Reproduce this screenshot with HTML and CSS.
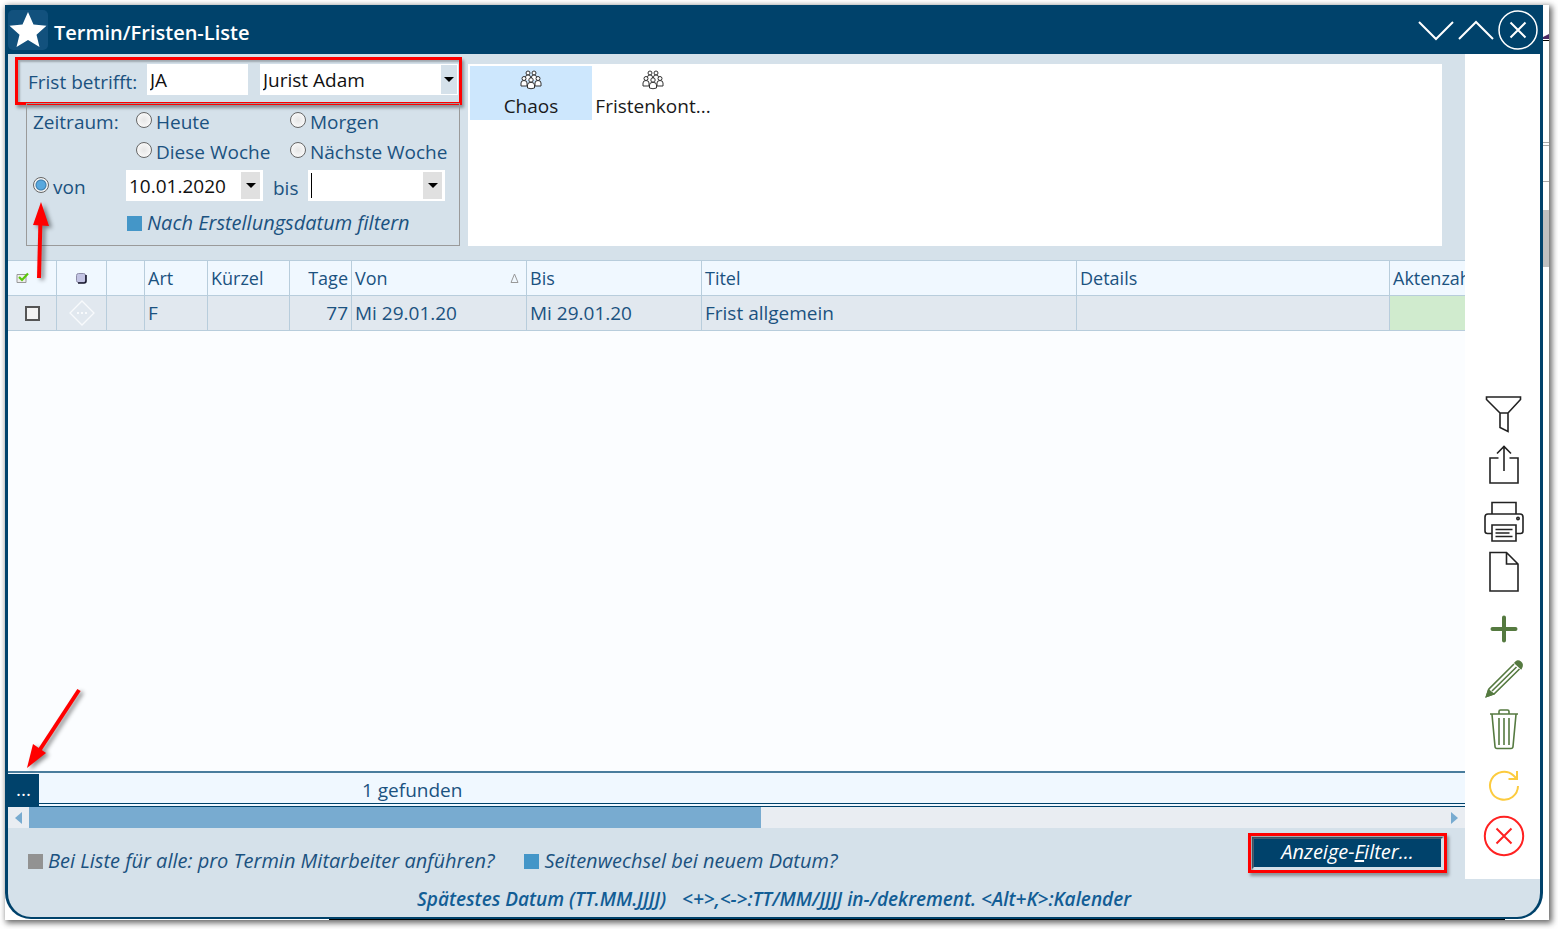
FILE: index.html
```html
<!DOCTYPE html>
<html lang="de">
<head>
<meta charset="utf-8">
<title>Termin/Fristen-Liste</title>
<link rel="stylesheet" href="styles.css">
</head>
<body>
<div class="sheet">
  <svg class="behind-right" width="6" height="280" aria-hidden="true">
    <path d="M0 32L6 29V34H0z" fill="#4b2a63"/><path d="M0 35.500H6" stroke="#000"/>
    <path d="M0 137.500H6M0 140.500H6M0 176.500H6" stroke="#a9a9a9"/>
    <path d="M0 205H6V262H0z" fill="#c0c0c0"/>
  </svg>
  <div class="behind-bottom"></div>
  <div class="window">
    <header class="titlebar">
      <svg class="star" width="40" height="40" viewBox="0 0 40 40" aria-hidden="true"><rect width="40" height="40" rx="5" fill="#12517d"/><path d="M20 2l5.500 12.500 13 1.300-10 9 3 12.200-11.500-7-11.500 7 3-12.200-10-9 13-1.300z" fill="#fff"/></svg>
      <h1>Termin/Fristen-Liste</h1>
      <div class="wincontrols">
        <button aria-label="Minimieren"><svg width="36" height="40" viewBox="0 0 36 40"><path d="M1 12l17 17 17-17"/></svg></button>
        <button aria-label="Maximieren"><svg width="36" height="40" viewBox="0 0 36 40"><path d="M1 29l17-17 17 17"/></svg></button>
        <button aria-label="Schließen"><svg width="40" height="40" viewBox="0 0 40 40"><circle cx="20" cy="20" r="19"/><path d="M12.500 12.500l15 15M27.500 12.500l-15 15"/></svg></button>
      </div>
    </header>
    <div class="content">
      <main class="main">
        <section class="filters">
          <div class="criteria">
            <div class="person">
              <label for="code">Frist betrifft:</label>
              <input id="code" class="field code" type="text" value="JA">
              <div class="combo">
                <select class="field" aria-label="Person"><option>Jurist Adam</option></select>
                <span class="drop"><svg width="10" height="6"><path d="M0 0h10L5 5z"/></svg></span>
              </div>
            </div>
            <fieldset class="period">
              <div class="choices">
                <span>Zeitraum:</span>
                <label><input type="radio" name="z"><span>Heute</span></label>
                <label><input type="radio" name="z"><span>Morgen</span></label>
                <label class="second"><input type="radio" name="z"><span>Diese Woche</span></label>
                <label><input type="radio" name="z"><span>Nächste Woche</span></label>
              </div>
              <div class="range">
                <label class="from"><input type="radio" name="z" checked><span>von</span></label>
                <div class="date"><input type="text" value="10.01.2020" aria-label="von Datum"><button aria-label="Kalender von"><svg width="10" height="6"><path d="M0 0h10L5 5z"/></svg></button></div>
                <label for="to" class="to">bis</label>
                <div class="date"><span class="caret"></span><input id="to" type="text"><button aria-label="Kalender bis"><svg width="10" height="6"><path d="M0 0h10L5 5z"/></svg></button></div>
              </div>
              <label class="check created"><input type="checkbox"><span>Nach Erstellungsdatum filtern</span></label>
              <svg class="arrow-up" width="28" height="84" aria-hidden="true"><path d="M12 79L13.500 20" stroke="#f00" stroke-width="4"/><path d="M14 3L22 27 6 26z" fill="#f00"/></svg>
            </fieldset>
          </div>
          <div class="groups">
            <button class="group selected"><svg width="22" height="20" viewBox="0 0 22 20"><use href="#people"/></svg><span>Chaos</span></button>
            <button class="group"><svg width="22" height="20" viewBox="0 0 22 20"><use href="#people"/></svg><span>Fristenkont...</span></button>
          </div>
        </section>
        <section class="list">
          <table>
            <colgroup><col class="c1"><col class="c2"><col class="c3"><col class="c4"><col class="c5"><col class="c6"><col class="c7"><col class="c7"><col class="c9"><col class="c10"><col></colgroup>
            <thead><tr>
              <th class="tick"><svg width="14" height="12" viewBox="0 0 14 12"><path d="M1 2.500h9v8H1z" fill="#eee" stroke="#999"/><path d="M3 5l3 3 6-6.500" fill="none" stroke="#5ac80a" stroke-width="2.200"/></svg></th>
              <th class="mid"><svg width="11" height="11" viewBox="0 0 11 11"><rect x=".5" y=".5" width="9" height="9" rx="2" fill="#c3c4e4" stroke="#8d8da8"/><path d="M10 2v6q0 2-2 2H2" fill="none" stroke="#16162c" stroke-width="1.600"/></svg></th>
              <th></th><th>Art</th><th>Kürzel</th><th class="num">Tage</th>
              <th><div class="sorted"><span>Von</span><svg width="9" height="11"><path d="M1 9.500L4.500 1 8 9.500z" fill="none" stroke="#999"/></svg></div></th>
              <th>Bis</th><th>Titel</th><th>Details</th><th>Aktenzahl</th>
            </tr></thead>
            <tbody><tr>
              <td class="mid"><input type="checkbox" aria-label="Zeile auswählen"></td>
              <td class="mid"><svg width="26" height="26" viewBox="0 0 26 26"><path d="M13 1l12 12-12 12L1 13z" fill="none" stroke="#f8fafc" stroke-width="1.300"/><path d="M8 13h10" stroke="#f8fafc" stroke-width="2" stroke-dasharray="2 2"/></svg></td>
              <td></td><td>F</td><td></td><td class="num">77</td><td>Mi 29.01.20</td><td>Mi 29.01.20</td><td>Frist allgemein</td><td></td><td class="file"></td>
            </tr></tbody>
          </table>
        </section>
        <div class="status">
          <button class="more">...</button><span>1 gefunden</span>
          <svg class="arrow-down" width="64" height="90" aria-hidden="true"><path d="M55 7L15 68" stroke="#f00" stroke-width="4"/><path d="M3 85L9 61 22 70z" fill="#f00"/></svg>
        </div>
        <div class="scrollbar">
          <button aria-label="Nach links"><svg width="7" height="12"><path d="M7 0v12L0 6z"/></svg></button>
          <div class="track"><div class="thumb"></div></div>
          <button aria-label="Nach rechts"><svg width="7" height="12"><path d="M0 0v12l7-6z"/></svg></button>
        </div>
        <div class="options">
          <label class="check off"><input type="checkbox"><span>Bei Liste für alle: pro Termin Mitarbeiter anführen?</span></label>
          <label class="check"><input type="checkbox"><span>Seitenwechsel bei neuem Datum?</span></label>
          <div class="marked"><button class="display">Anzeige-<u>F</u>ilter...</button></div>
        </div>
      </main>
      <aside class="tools">
        <div>
          <button aria-label="Filter"><svg width="42" height="42" viewBox="0 0 42 42"><path d="M3.500 3h34v2.500L25 19v18.500l-8-4V19L3.500 5.500zM17 19h8"/></svg></button>
          <button aria-label="Exportieren"><svg width="42" height="42" viewBox="0 0 42 42"><path d="M15.500 14H7v25h28V14h-8.500M21 27V2.500M14 9.500l7-7 7 7"/></svg></button>
        </div>
        <div>
          <button aria-label="Drucken"><svg width="42" height="42" viewBox="0 0 42 42"><path d="M9 13V1.500h24V13M9 32.500H4.500Q2 32.500 2 30V16q0-3 3-3h32q3 0 3 3v14q0 2.500-2.500 2.500H33M9 24h24v16H9zM12.500 28.500h17M12.500 32h14M12.500 35.500h17"/><circle cx="35" cy="17.500" r="1.200"/></svg></button>
          <button aria-label="Neues Dokument"><svg width="42" height="42" viewBox="0 0 42 42"><path d="M7 1.500h16.500L35 13v27H7zM23.500 1.500V13H35"/></svg></button>
        </div>
        <div class="green">
          <button aria-label="Hinzufügen"><svg width="42" height="42" viewBox="0 0 42 42"><path d="M21 9.500v23M9.500 21h23" stroke-width="4" stroke-linecap="round"/></svg></button>
          <button aria-label="Bearbeiten"><svg width="42" height="42" viewBox="0 0 42 42"><path d="M31 6L6 31 3.500 38.500l8-3L36.500 11M33.500 9L9 33"/><path d="M32 5q2.500-3.500 5.500-1t.500 6.500zM3.500 38.500L5.500 32l5 4z" fill="#557a40"/></svg></button>
          <button aria-label="Löschen"><svg width="42" height="42" viewBox="0 0 42 42"><path d="M7 6h28M16 5.500V3.500Q16 2 17.500 2h7Q26 2 26 3.500v2M9 6.500l3 32q.200 2 2 2h14q1.800 0 2-2l3-32M16 10v27M21 10v27M26 10v27"/></svg></button>
        </div>
        <div>
          <button class="yellow" aria-label="Aktualisieren"><svg width="42" height="42" viewBox="0 0 42 42"><path d="M35 21a14 14 0 1 1-4.500-10.500L34 14M25.500 14H34V6"/></svg></button>
          <button class="red" aria-label="Abbrechen"><svg width="42" height="42" viewBox="0 0 42 42"><circle cx="21" cy="21" r="19.200"/><path d="M13.500 13.500l15 15M28.500 13.500l-15 15"/></svg></button>
        </div>
      </aside>
    </div>
    <footer class="hint"><span>Spätestes Datum (TT.MM.JJJJ)</span><span>&lt;+&gt;,&lt;-&gt;:TT/MM/JJJJ in-/dekrement. &lt;Alt+K&gt;:Kalender</span></footer>
  </div>
</div>
<svg class="defs" width="0" height="0" aria-hidden="true">
  <g id="people" fill="#fff" stroke="#333">
    <circle cx="8" cy="3" r="2"/><circle cx="14" cy="3" r="2"/><path d="M5.500 10V7q0-2 2.500-2t2.500 2v3M11.500 10V7q0-2 2.500-2t2.500 2v3"/>
    <circle cx="4" cy="8.500" r="2"/><circle cx="18" cy="8.500" r="2"/><path d="M1 16v-3q0-2.500 3-2.500T7 13v3zM15 16v-3q0-2.500 3-2.500T21 13v3z"/>
    <circle cx="11" cy="10" r="2.200"/><path d="M7.500 18v-3q0-2.700 3.500-2.700t3.500 2.700v3q-3.500 1.500-7 0z"/>
  </g>
</svg>
</body>
</html>
```

FILE: styles.css
```css
* { box-sizing: border-box; }
body {
  margin: 0;
  min-height: 100vh;
  display: flex;
  padding: 5px 9px 9px 5px;
  background: #fff;
  color: #1b5280;
  font: 19px/26px "Open Sans", "Noto Sans", sans-serif;
}
button, input, select { font: inherit; color: inherit; margin: 0; padding: 0; border: 0; border-radius: 0; background: none; outline: 0; }
button { display: inline-flex; align-items: center; justify-content: center; }
svg { display: block; flex: none; }
.defs { position: absolute; }

.sheet { position: relative; flex: 1; display: flex; min-width: 0; padding-right: 6px; background: #fff; box-shadow: 2px 2px 6px 1px rgba(0,0,0,.6); }
.behind-right { position: absolute; top: 0; right: 0; }
.behind-bottom { position: absolute; bottom: 0; left: 324px; right: 44px; height: 4px; background: #000; }
.window { position: relative; flex: 1; min-width: 0; display: flex; flex-direction: column; border: 3px solid #00426b; border-top: 0; border-bottom-width: 2px; border-radius: 0 0 26px 26px; margin-bottom: 1px; background: #d5e1ea; overflow: hidden; }

.titlebar { display: flex; align-items: center; height: 49px; background: #00426b; color: #fff; padding-right: 2px; }
.titlebar h1 { flex: 1; margin: 0 0 0 6px; padding-top: 7px; font-size: 20px; font-weight: 600; }
.wincontrols { display: flex; gap: 4px; }
.wincontrols svg { fill: none; stroke: #fff; stroke-width: 2; }
.wincontrols circle { stroke-width: 1.5; }

.content { flex: 1; display: grid; grid-template-columns: minmax(0, 1fr) 75px; }
.main { display: flex; flex-direction: column; min-width: 0; }

.filters { display: flex; padding: 10px 23px 14px 18px; gap: 8px; }
.criteria { width: 434px; display: flex; flex-direction: column; }
.person { position: relative; display: flex; align-items: center; padding: 0 2px; height: 31px; }
.person::after, .marked::after { content: ""; position: absolute; border: 3px solid #f00; box-shadow: 2px 3px 3px rgba(0,0,0,.35), inset 2px 2px 2px rgba(0,0,0,.25); pointer-events: none; }
.person::after { inset: -7px -2px -10px -11px; }
.person label { width: 119px; padding-top: 4px; }
.field { width: 100%; height: 31px; padding: 0 3px; background: #fff; color: #111; appearance: none; }
.person .code { width: 101px; margin-right: 12px; }
.combo { flex: 1; display: grid; grid-template-columns: 1fr 18px; }
.combo select { grid-area: 1 / 1 / 2 / 3; }
.drop { grid-area: 1 / 2; display: grid; place-items: center; background: #d5e1ea; border: 1px solid #fff; pointer-events: none; }

.period { position: relative; flex: 1; margin: 8px 0 0; padding: 5px 6px 9px; border: 1px solid #9a9a9a; min-width: 0; }
.choices { display: grid; grid-template-columns: 103px 154px 1fr; row-gap: 4px; white-space: nowrap; }
.choices .second { grid-column: 2; }
.choices label, .from { display: flex; gap: 4px; }
input[type=radio] { appearance: none; width: 16px; height: 16px; margin-top: 3px; border: 1px solid #666; border-radius: 50%; background: radial-gradient(circle, #e6e6e6, #fff); flex: none; }
input[type=radio]:checked { background: radial-gradient(circle, #58a8de 0 4px, #3c7cab 5px, #f4f4f4 6px); }
.range { display: flex; align-items: center; padding-top: 5px; }
.from { width: 93px; padding-top: 3px; }
.date { display: flex; align-items: center; width: 137px; height: 31px; padding: 2px 3px; background: #fff; color: #111; }
.date input { flex: 1; min-width: 0; height: 27px; }
.date button { width: 19px; height: 27px; background: #e0e0e0; }
.to { width: 45px; padding: 4px 0 0 10px; }
.caret { width: 1px; height: 25px; background: #000; }
.check { display: flex; align-items: center; gap: 5px; font-size: 20px; font-style: italic; white-space: nowrap; }
.check input { appearance: none; width: 15px; height: 15px; background: #4496c8; }
.check.off input { background: #929292; }
.created { padding: 9px 0 0 94px; }
.arrow-up, .arrow-down { position: absolute; fill: none; filter: drop-shadow(3px 2px 2px rgba(0,0,0,.45)); }
.arrow-up { left: 0; top: 95px; }

.groups { flex: 1; display: flex; align-items: flex-start; padding: 2px; background: #fff; color: #1a1a1a; }
.group { width: 122px; height: 54px; padding-top: 2px; flex-direction: column; line-height: 26px; gap: 3px; }
.group.selected { background: #cde7fd; }

.list { flex: 1; background: #fbfdff; }
table { width: 100%; table-layout: fixed; border-collapse: separate; border-spacing: 0; }
th, td { height: 35px; padding: 0 3px; border: 0 solid #b8cddc; border-width: 0 1px 1px 0; text-align: left; font-weight: 400; white-space: nowrap; overflow: hidden; }
th { height: 36px; border-top-width: 1px; background: #f0f8ff; font-size: 18px; }
td { background: #e1e8ef; }
th:last-child, td:last-child { border-right: 0; padding-right: 0; }
td.file { background: #d0ebce; }
.c1 { width: 49px; } .c2 { width: 50px; } .c3 { width: 38px; } .c4 { width: 63px; } .c5 { width: 82px; } .c6 { width: 62px; } .c7 { width: 175px; } .c9 { width: 375px; } .c10 { width: 313px; }
th.num, td.num { text-align: right; }
th.tick { padding-left: 8px; }
.mid svg, .mid input { margin: 0 auto; }
.mid input { appearance: none; display: block; width: 15px; height: 15px; border: 2px solid #555; background: #f3f3f3; }
.sorted { display: flex; align-items: center; justify-content: space-between; padding-right: 4px; }

.status { position: relative; display: flex; align-items: center; height: 36px; border-top: 2px solid #4a7d9d; border-bottom: 4px double #00426b; background: #f0f8ff; }
.status span { padding-top: 3px; }
.more { align-self: stretch; width: 31px; margin: 1px 323px -4px 0; padding-bottom: 3px; background: #00426b; color: #fff; }
.arrow-down { left: 16px; bottom: 30px; }
.scrollbar { display: flex; height: 21px; background: #e9edf2; }
.scrollbar button { width: 21px; fill: #78abd0; }
.track { flex: 1; display: flex; }
.thumb { width: 51.7%; background: #78abd0; }
.options { display: flex; align-items: flex-end; padding: 9px 22px 5px 20px; gap: 30px; }
.marked { position: relative; margin: 0 0 5px auto; }
.marked::after { inset: -4px; }
.display { width: 191px; height: 32px; padding-bottom: 2px; border: 2px solid #4d6378; border-right-color: #d5e1ea; border-bottom-color: #d5e1ea; background: #00426b; color: #fff; font-size: 20px; font-style: italic; }

.tools { display: flex; flex-direction: column; justify-content: flex-end; gap: 7px; padding: 0 0 18px 2px; background: #fff; }
.tools div { display: flex; flex-direction: column; align-items: center; }
.tools button { width: 50px; height: 50px; }
.tools svg { fill: none; stroke: #222; stroke-width: 1.6; }
.tools .green svg { stroke: #557a40; }
.tools .yellow svg { stroke: #fccb3f; stroke-width: 2; }
.tools .red svg { stroke: #f22; stroke-width: 2; }
.hint { display: flex; justify-content: center; gap: 16px; height: 38px; padding-top: 7px; color: #125d95; font-size: 19px; font-weight: 600; font-style: italic; white-space: nowrap; }
```
